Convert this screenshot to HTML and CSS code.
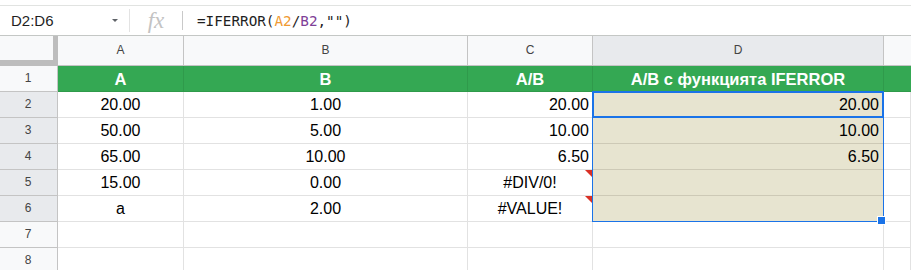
FILE: index.html
```html
<html>
<head>
<meta charset="utf-8">
<link rel="stylesheet" href="styles.css">
</head>
<body>

<div class="topline"></div>
<div class="fbar">
	<div class="namebox"><span class="ref">D2:D6</span><span class="caret"></span></div>
	<div class="sep"></div>
	<div class="fx">fx</div>
	<div class="sep2"></div>
	<div class="formula">=IFERROR(<span class="r1">A2</span>/<span class="r2">B2</span>,"")</div>
</div>

<div class="sheet">
	<div class="grid">
		<div class="corner"></div>
		<div class="ch">A</div>
		<div class="ch">B</div>
		<div class="ch">C</div>
		<div class="ch on">D</div>
		<div class="ch last"></div>

		<div class="rh">1</div>
		<div class="hd">A</div>
		<div class="hd">B</div>
		<div class="hd">A/B</div>
		<div class="hd">A/B с функцията IFERROR</div>
		<div class="hd last"></div>

		<div class="rh on">2</div>
		<div class="c mid">20.00</div>
		<div class="c mid">1.00</div>
		<div class="c num">20.00</div>
		<div class="c num res">20.00</div>
		<div class="c"></div>

		<div class="rh on">3</div>
		<div class="c mid">50.00</div>
		<div class="c mid">5.00</div>
		<div class="c num">10.00</div>
		<div class="c num res">10.00</div>
		<div class="c"></div>

		<div class="rh on">4</div>
		<div class="c mid">65.00</div>
		<div class="c mid">10.00</div>
		<div class="c num">6.50</div>
		<div class="c num res">6.50</div>
		<div class="c"></div>

		<div class="rh on">5</div>
		<div class="c mid">15.00</div>
		<div class="c mid">0.00</div>
		<div class="c mid err">#DIV/0!<span class="flag"></span></div>
		<div class="c res"></div>
		<div class="c"></div>

		<div class="rh on">6</div>
		<div class="c mid">a</div>
		<div class="c mid">2.00</div>
		<div class="c mid err">#VALUE!<span class="flag"></span></div>
		<div class="c res"></div>
		<div class="c"></div>

		<div class="rh">7</div>
		<div class="c"></div>
		<div class="c"></div>
		<div class="c"></div>
		<div class="c"></div>
		<div class="c"></div>

		<div class="rh">8</div>
		<div class="c"></div>
		<div class="c"></div>
		<div class="c"></div>
		<div class="c"></div>
		<div class="c"></div>
	</div>
	<div class="range"></div>
	<div class="active"></div>
	<div class="handle"></div>
</div>

</body>
</html>
```

FILE: styles.css
```css
body {
	margin:0;
	background:#fff;
	font-family:"Liberation Sans", Arial, sans-serif;
	overflow:hidden;
}
.topline {
	height:5px;
	border-bottom:1px solid #e1e3e1;
}
.fbar {
	display:flex;
	align-items:center;
	height:29px;
	border-bottom:1px solid #c4c7c5;
}
.namebox {
	display:flex;
	align-items:center;
	width:129px;
	box-sizing:border-box;
	padding-left:11px;
	padding-right:11px;
}
.ref {
	flex:1;
	font-family:"Liberation Sans", Arial, sans-serif;
	font-size:15px;
	color:#1f1f1f;
}
.caret {
	width:0;
	height:0;
	border-left:3px solid transparent;
	border-right:3px solid transparent;
	border-top:3px solid #5f6368;
}
.sep {
	width:1px;
	height:23px;
	background:#e3e3e3;
}
.fx {
	width:52px;
	text-align:center;
	font-family:"Liberation Serif", serif;
	font-style:italic;
	font-size:23px;
	color:#c3c3c3;
	line-height:20px;
}
.sep2 {
	width:1px;
	height:19px;
	background:#c9c9c9;
}
.formula {
	padding-left:14px;
	font-family:"DejaVu Sans Mono", monospace;
	font-size:14.3px;
	color:#1f1f1f;
}
.r1 { color:#f09a32; }
.r2 { color:#7f3f98; }

.sheet {
	position:relative;
}
.grid {
	display:grid;
	grid-template-columns:58px 126px 284px 125px 291px 1fr;
	grid-template-rows:30px repeat(8, 26px);
}
.grid > div {
	box-sizing:border-box;
	border-right:1px solid #e2e2e2;
	border-bottom:1px solid #e2e2e2;
	white-space:nowrap;
	overflow:hidden;
}
.grid > .corner {
	background:#f8f9fa;
	border-right:5px solid #bdbdbd;
	border-bottom:6px solid #bdbdbd;
}
.grid > .ch {
	background:#f8f9fa;
	border-right-color:#c4c4c4;
	border-bottom-color:#c4c4c4;
	text-align:center;
	font-size:12px;
	line-height:29px;
	color:#444;
}
.grid > .ch.on { background:#e8eaed; }
.grid > .ch.last { border-right:none; }
.grid > .rh {
	background:#f8f9fa;
	border-right-color:#c4c4c4;
	border-bottom-color:#c4c4c4;
	text-align:center;
	font-size:12px;
	line-height:25px;
	color:#444;
	padding-right:1px;
}
.grid > .rh.on { background:#e8eaed; }
.grid > .hd {
	background:#34a853;
	border-right-color:#2f9a4b;
	border-bottom-color:#2f9a4b;
	color:#fff;
	font-weight:bold;
	font-size:16.5px;
	text-align:center;
	line-height:25px;
	padding-top:1px;
}
.grid > .hd.last { border-right:none; }
.grid > .c {
	font-size:16px;
	line-height:25px;
	color:#000;
	position:relative;
}
.grid > .mid { text-align:center; }
.grid > .num {
	text-align:right;
	padding-right:3px;
}
.grid > .res {
	background:#e7e4d0;
	border-bottom-color:#cdc9b6;
	padding-right:4px;
}
.flag {
	position:absolute;
	top:0;
	right:0;
	width:0;
	height:0;
	border-top:7px solid #d93025;
	border-left:7px solid transparent;
}
.range {
	position:absolute;
	left:592px;
	top:55px;
	width:292px;
	height:131px;
	box-sizing:border-box;
	border:1px solid #1a73e8;
}
.active {
	position:absolute;
	left:592px;
	top:55px;
	width:292px;
	height:27px;
	box-sizing:border-box;
	border:2px solid #1a73e8;
}
.handle {
	position:absolute;
	left:877px;
	top:180px;
	width:9px;
	height:9px;
	box-sizing:border-box;
	background:#1a73e8;
	border:1px solid #fff;
}
```
